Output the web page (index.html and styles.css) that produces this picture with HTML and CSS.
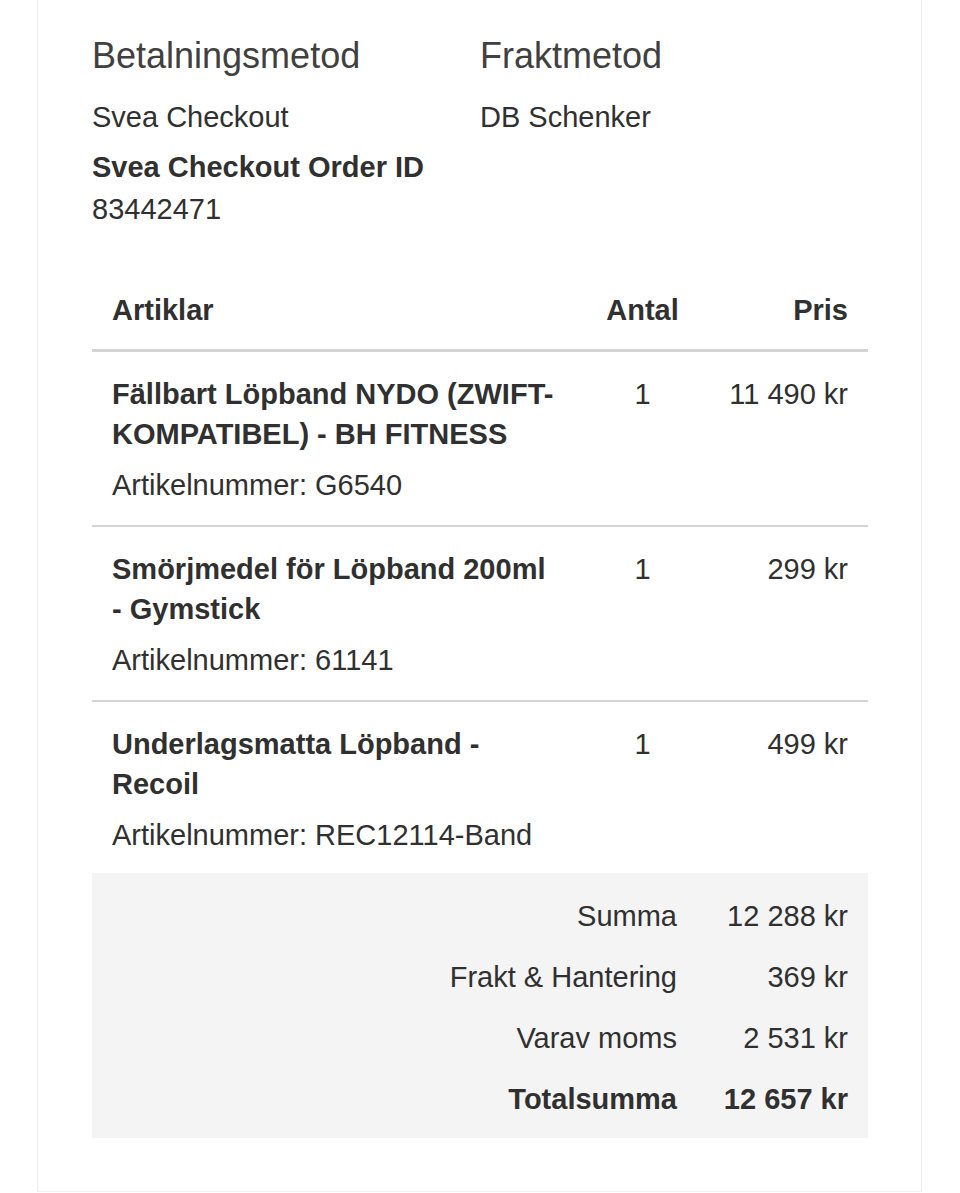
FILE: index.html
```html
<!DOCTYPE html>
<html lang="sv">
<head>
<meta charset="utf-8">
<title>Orderbekräftelse</title>
<link rel="stylesheet" href="styles.css">
</head>
<body>
<div class="card">
  <div class="info">
    <div class="info-col">
      <h2 class="info-title">Betalningsmetod</h2>
      <p class="info-text">Svea Checkout</p>
      <p class="info-label">Svea Checkout Order ID</p>
      <p class="info-value">83442471</p>
    </div>
    <div class="info-col">
      <h2 class="info-title">Fraktmetod</h2>
      <p class="info-text">DB Schenker</p>
    </div>
  </div>

  <table class="items">
    <colgroup>
      <col class="col-item">
      <col class="col-qty">
      <col class="col-price">
    </colgroup>
    <thead>
      <tr>
        <th class="c-item">Artiklar</th>
        <th class="c-qty">Antal</th>
        <th class="c-price">Pris</th>
      </tr>
    </thead>
    <tbody>
      <tr class="row">
        <td class="c-item">
          <div class="name">Fällbart Löpband NYDO (ZWIFT-KOMPATIBEL) - BH FITNESS</div>
          <div class="sku">Artikelnummer: G6540</div>
        </td>
        <td class="c-qty">1</td>
        <td class="c-price">11&nbsp;490&nbsp;kr</td>
      </tr>
      <tr class="row">
        <td class="c-item">
          <div class="name">Smörjmedel för Löpband 200ml - Gymstick</div>
          <div class="sku">Artikelnummer: 61141</div>
        </td>
        <td class="c-qty">1</td>
        <td class="c-price">299&nbsp;kr</td>
      </tr>
      <tr class="row last">
        <td class="c-item">
          <div class="name">Underlagsmatta Löpband - Recoil</div>
          <div class="sku">Artikelnummer: REC12114-Band</div>
        </td>
        <td class="c-qty">1</td>
        <td class="c-price">499&nbsp;kr</td>
      </tr>
    </tbody>
    <tfoot class="totals">
      <tr class="t-row first">
        <td class="t-label" colspan="2">Summa</td>
        <td class="t-value">12&nbsp;288&nbsp;kr</td>
      </tr>
      <tr class="t-row">
        <td class="t-label" colspan="2">Frakt &amp; Hantering</td>
        <td class="t-value">369&nbsp;kr</td>
      </tr>
      <tr class="t-row">
        <td class="t-label" colspan="2">Varav moms</td>
        <td class="t-value">2&nbsp;531&nbsp;kr</td>
      </tr>
      <tr class="t-row total">
        <td class="t-label" colspan="2">Totalsumma</td>
        <td class="t-value">12&nbsp;657&nbsp;kr</td>
      </tr>
    </tfoot>
  </table>
</div>
</body>
</html>
```

FILE: styles.css
```css
html, body {
  margin: 0;
  padding: 0;
  background: #ffffff;
}

body {
  font-family: "Liberation Sans", Arial, Helvetica, sans-serif;
  color: #303030;
  font-size: 29px;
  line-height: 40px;
}

.card {
  box-sizing: border-box;
  width: 885px;
  margin-left: 37px;
  padding: 34px 53px 53px 54px;
  border-left: 1px solid #ededed;
  border-right: 1px solid #ededed;
  border-bottom: 1px solid #f2f2f2;
}

.info {
  display: grid;
  grid-template-columns: 388px 1fr;
}

.info-title {
  margin: 0;
  font-size: 36px;
  line-height: 44px;
  font-weight: normal;
  color: #404040;
}

.info-text {
  margin: 19px 0 0;
}

.info-label {
  margin: 10px 0 0;
  font-weight: bold;
}

.info-value {
  margin: 2px 0 0;
}

.items {
  width: 100%;
  margin-top: 41px;
  border-collapse: collapse;
  table-layout: fixed;
}

.col-item { width: 496px; }
.col-qty { width: 109px; }
.col-price { width: 171px; }

.items th {
  font-weight: bold;
  padding: 20px 20px 19px;
  border-bottom: 3px solid #d4d4d4;
}

.items td {
  vertical-align: top;
}

.c-item {
  text-align: left;
}

.items .c-item {
  padding-left: 20px;
  padding-right: 26px;
}

.items .c-qty {
  text-align: center;
  padding-left: 0;
  padding-right: 0;
}

.items .c-price {
  text-align: right;
  padding-right: 20px;
  padding-left: 0;
}

.row td {
  padding-top: 22px;
  padding-bottom: 20px;
  border-bottom: 2px solid #d4d4d4;
}

.row.last td {
  padding-bottom: 18px;
  border-bottom: none;
}

.name {
  font-weight: bold;
}

.sku {
  margin-top: 11px;
}

.totals .t-row td {
  background: #f4f4f4;
  padding-top: 10px;
  padding-bottom: 10px;
  line-height: 41px;
}

.totals .t-row.first td {
  padding-top: 23px;
}

.totals .t-row.total td {
  padding-bottom: 18px;
  font-weight: bold;
}

.t-label {
  text-align: right;
  padding-right: 20px;
}

.t-value {
  text-align: right;
  padding-right: 20px;
}
```
